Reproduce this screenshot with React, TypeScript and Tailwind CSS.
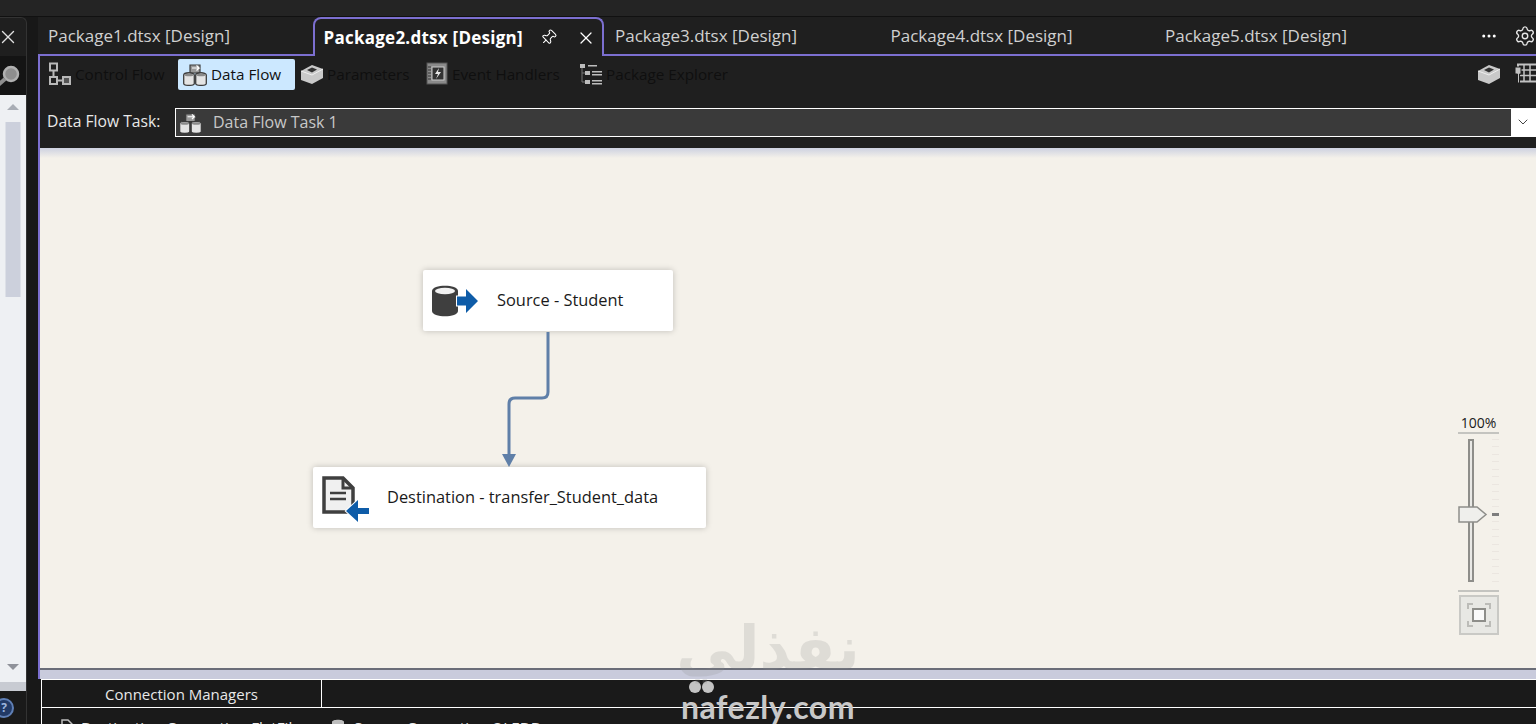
import React from 'react';
import { X, Pin, Ellipsis, Settings, ChevronDown } from 'lucide-react';

const FONT = "font-['Open_Sans','Noto_Sans',sans-serif]";

function ControlFlowIcon() {
  return (
    <svg width="24" height="24" viewBox="0 0 24 24" fill="none" stroke="#b8b8b8" strokeWidth="2">
      <rect x="2" y="1.500" width="7" height="7" />
      <rect x="2" y="15" width="7" height="7" />
      <rect x="15" y="15" width="7" height="7" fill="#555" />
      <path d="M5.500 8.500v6.500M9 18.500h6" />
    </svg>
  );
}

function DataFlowIcon({ color = '#3d3d3d', size = 24 }: { color?: string; size?: number }) {
  return (
    <svg width={size} height={size} viewBox="0 0 24 24">
      <path d="M7 3h10v8H7z" fill="#9a9a9a" stroke={color} strokeWidth="1.200" />
      <g fill="#e4e4e4" stroke={color} strokeWidth="1.300">
        <path d="M.7 13c0-3 10.600-3 10.600 0v8.500c0 2.500-10.600 2.500-10.600 0z" />
        <path d="M12.700 13c0-3 10.600-3 10.600 0v8.500c0 2.500-10.600 2.500-10.600 0z" />
      </g>
      <ellipse cx="6" cy="13" rx="4.500" ry="1.300" fill="#8a8a8a" />
      <ellipse cx="18" cy="13" rx="4.500" ry="1.300" fill="#8a8a8a" />
      <path d="M9 6h7l-2.500-2.500M16 6l-2.500 2.500" fill="none" stroke="#fff" strokeWidth="1.200" />
    </svg>
  );
}

function CubeIcon({ size = 24 }: { size?: number }) {
  return (
    <svg width={size} height={size} viewBox="0 0 24 24">
      <path d="M1 9l11-6 11 4v9l-11 6-11-4z" fill="#c9c9c9" />
      <path d="M7 8l5-2.500 5 2-5 3z" fill="#333" />
      <path d="M1 9l11 4 11-6" fill="none" stroke="#eee" strokeWidth="1" />
    </svg>
  );
}

function EventIcon() {
  return (
    <svg width="22" height="24" viewBox="0 0 22 24">
      <rect x="1" y="1" width="20" height="21" fill="#8a8a8a" stroke="#555" />
      <rect x="6" y="5" width="12" height="13" fill="#333" stroke="#ccc" />
      <path d="M13 6l-4 6h3l-2 5 5-7h-3z" fill="#e8e8e8" />
      <path d="M2 5h3M2 8h3M2 11h3M2 14h3M2 17h3" stroke="#333" />
    </svg>
  );
}

function ExplorerIcon() {
  return (
    <svg width="24" height="24" viewBox="0 0 24 24" fill="#bdbdbd">
      <rect x="1" y="2" width="5" height="4" />
      <rect x="6" y="9" width="5" height="4" />
      <rect x="6" y="18" width="5" height="4" />
      <path d="M9 3h9v1.500H9zM13 9h10v1.500H13zM13 12h10v1.500H13zM13 18h10v1.500H13zM13 21h10v1.500H13z" />
      <path d="M3 6v14h3M3 11h3" fill="none" stroke="#777" />
    </svg>
  );
}

function GridIcon() {
  return (
    <svg width="24" height="24" viewBox="0 0 24 24" fill="none" stroke="#c2c2c2">
      <rect x="4" y="2.500" width="19" height="17" strokeWidth="2" />
      <path d="M4 8h19M4 13.500h19M10 3v16M16 3v16" strokeWidth="1.500" />
      <path d="M1 5h6v7H5.500v9h-2v-9H1z" fill="#c2c2c2" stroke="#1f1f1f" />
    </svg>
  );
}

function SourceIcon() {
  return (
    <svg width="47" height="34" viewBox="0 0 47 34">
      <path d="M0 7c0-7 26-7 26 0v20c0 7-26 7-26 0z" fill="#3f3f3f" />
      <ellipse cx="13" cy="7" rx="10" ry="3.300" fill="#f2f2f2" />
      <path d="M25 12.500h9V5l12 12-12 12v-7.500h-9z" fill="#0e5ca8" stroke="#fff" strokeWidth="2" paintOrder="stroke" />
    </svg>
  );
}

function DestinationIcon() {
  return (
    <svg width="48" height="46" viewBox="0 0 48 46">
      <path d="M2 2h19l10 10v24H2z" fill="#f0f0f0" stroke="#3f3f3f" strokeWidth="3.500" />
      <path d="M21 2v10h10" fill="none" stroke="#3f3f3f" strokeWidth="3" />
      <path d="M8 17h16M8 23h16" stroke="#3f3f3f" strokeWidth="2.500" />
      <path d="M47 35H36v-8L24 38l12 11v-8h11z" fill="#0e5ca8" stroke="#fff" strokeWidth="2" paintOrder="stroke" transform="translate(0 -3)" />
    </svg>
  );
}

function Node({ className, icon, label, textClass }: { className: string; icon: React.ReactNode; label: string; textClass: string }) {
  return (
    <div className={`absolute flex h-[61px] items-center rounded-[2px] bg-white text-[16.4px] text-[#1a1a1a] shadow-[0_0_6px_rgba(0,0,0,0.22)] ${className}`}>
      {icon}
      <span className={`whitespace-nowrap ${textClass}`}>{label}</span>
    </div>
  );
}

function ZoomSlider() {
  const ticks = Array.from({ length: 20 });
  return (
    <div className="absolute left-[1418px] top-[255px] flex w-[41px] flex-col items-center">
      <div className="h-[19px] text-[14px] leading-[19px] text-[#1a1a1a]">100%</div>
      <div className="h-[2px] w-full bg-[#c4c4c0]" />
      <div className="relative mt-[5px] h-[143px] w-full">
        <div className="absolute left-[10px] top-0 h-full w-[6px] border-2 border-[#8e8e8a] bg-[#e9e9e6]" />
        <div className="absolute left-[34px] top-0 flex h-full flex-col justify-between">
          {ticks.map((_, i) => (
            <div key={i} className="h-px w-[7px] bg-[#ebe6e0]" />
          ))}
        </div>
        <div className="absolute left-[34px] top-[74px] h-[3px] w-[7px] bg-[#7d7d7d]" />
        <svg className="absolute left-0 top-[67px]" width="30" height="17" viewBox="0 0 30 17">
          <path d="M1 1h18l9 7.500-9 7.500H1z" fill="#efefec" stroke="#8e8e8a" strokeWidth="1.500" />
        </svg>
      </div>
      <div className="mt-[8px] h-[2px] w-full bg-[#c4c4c0]" />
      <div className="mt-[3px] flex h-[40px] w-[40px] items-center justify-center border-2 border-[#c9c9c5] bg-[#e8e8e4]">
        <svg width="24" height="24" viewBox="0 0 24 24" fill="none">
          <path d="M1 6V1h5M18 1h5v5M23 18v5h-5M6 23H1v-5" stroke="#bcbcb8" strokeWidth="2" />
          <rect x="6" y="6" width="12" height="12" fill="#fafafa" stroke="#8e8e8a" strokeWidth="2" />
        </svg>
      </div>
    </div>
  );
}

export default function App() {
  return (
    <div className={`relative flex h-[724px] w-[1536px] flex-col overflow-hidden bg-[#181818] ${FONT}`}>
      {/* title strip */}
      <div className="h-[17px] shrink-0 border-b border-[#111] bg-[#242424]" />

      <div className="flex min-h-0 flex-1">
        {/* left dock */}
        <div className="flex w-[27px] shrink-0 flex-col overflow-hidden rounded-tr-[6px] border-r border-t border-[#333] bg-[#1f1f1f]">
          <div className="flex h-[38px] shrink-0 items-center">
            <X className="-ml-[3px] text-[#e0e0e0]" size={22} strokeWidth={1.500} />
          </div>
          <div className="flex h-[39px] shrink-0 items-center bg-[#141414]">
            <svg width="26" height="26" viewBox="0 0 26 26" className="-ml-[4px]">
              <circle cx="15" cy="11" r="7" fill="#8e8e8e" stroke="#b0b0b0" strokeWidth="2.500" />
              <path d="M9 16l-7 6" stroke="#8e8e8e" strokeWidth="4" />
            </svg>
          </div>
          <div className="flex min-h-0 flex-1 flex-col items-center bg-[#eef0f3] pb-[12px]">
            <div className="mt-[9px] h-0 w-0 border-x-[6px] border-b-[6px] border-x-transparent border-b-[#a9adb5]" />
            <div className="mt-[12px] h-[175px] w-[15px] -translate-x-[0.5px] bg-[#ccd0dc]" />
            <div className="flex-1" />
            <div className="h-0 w-0 border-x-[6px] border-t-[6px] border-x-transparent border-t-[#8f929a]" />
          </div>
          <div className="h-[9px] shrink-0 bg-[#c8cbd2]" />
          <div className="flex h-[33px] shrink-0 items-center bg-[#1a1a1a]">
            <div className="-ml-[6px] flex h-[20px] w-[20px] items-center justify-center rounded-full border-2 border-[#5f7fb5] bg-[#223a66] text-[12px] font-bold text-[#9db5dd]">?</div>
          </div>
        </div>

        <div className="w-[11px] shrink-0" />

        {/* designer */}
        <div className="flex min-w-0 flex-1 flex-col">
          {/* document tabs */}
          <div className="relative z-10 -mb-[1px] flex h-[39px] shrink-0 bg-[#1f1f1f] text-[17px] text-[#d0d0d0]">
            <div className="flex w-[275px] items-center rounded-tl-[6px] border-b-2 border-[#7c6fd0] pl-[10px] pt-[1px]">Package1.dtsx [Design]</div>
            <div className="flex w-[292px] items-center rounded-t-[8px] border-2 border-b-0 border-[#7c6fd0] bg-[#1f1f1f] pl-[9px] font-bold tracking-[0.25px] text-white">
              <span className="w-[216px] whitespace-nowrap">Package2.dtsx [Design]</span>
              <Pin className="rotate-45 text-white" size={17} strokeWidth={1.500} />
              <X className="ml-[19px] text-white" size={20} strokeWidth={1.500} />
            </div>
            <div className="flex w-[275px] items-center border-b-2 border-[#7c6fd0] pl-[11px] pt-[1px]">Package3.dtsx [Design]</div>
            <div className="flex w-[275px] items-center border-b-2 border-[#7c6fd0] pl-[12px] pt-[1px]">Package4.dtsx [Design]</div>
            <div className="flex flex-1 items-center border-b-2 border-[#7c6fd0] pl-[12px] pt-[1px]">
              <span className="w-[315px] whitespace-nowrap">Package5.dtsx [Design]</span>
              <Ellipsis className="text-white" size={18} />
              <Settings className="ml-[16px] shrink-0 text-[#e6e6e6]" size={22} strokeWidth={1.500} />
            </div>
          </div>

          <div className="flex min-h-0 flex-1 flex-col border-l-2 border-[#7c6fd0]">
            {/* designer tabs */}
            <div className="flex h-[41px] shrink-0 items-center bg-[#1f1f1f] pl-[8px] pb-[3px] text-[15.25px] text-[#0f0f0f]">
              <ControlFlowIcon />
              <span className="ml-[3px] w-[93px] whitespace-nowrap">Control Flow</span>
              <div className="ml-[10px] flex h-[31px] w-[117px] items-center rounded-[2px] bg-[#cce8ff] pl-[5px] text-[#111]">
                <DataFlowIcon />
                <span className="ml-[4px] whitespace-nowrap">Data Flow</span>
              </div>
              <div className="ml-[5px] flex items-center">
                <CubeIcon />
                <span className="ml-[3px] w-[84px] whitespace-nowrap">Parameters</span>
              </div>
              <div className="ml-[15px] flex items-center">
                <EventIcon />
                <span className="ml-[4px] w-[111px] whitespace-nowrap">Event Handlers</span>
              </div>
              <div className="ml-[16px] flex flex-1 items-center">
                <ExplorerIcon />
                <span className="ml-[3px] whitespace-nowrap">Package Explorer</span>
              </div>
              <CubeIcon />
              <div className="ml-[13px] -mr-[2px]">
                <GridIcon />
              </div>
            </div>

            {/* task picker */}
            <div className="flex h-[52px] shrink-0 items-center bg-[#1f1f1f] pl-[7px] text-[15.7px] text-[#e8e8e8]">
              <span className="w-[128px] whitespace-nowrap">Data Flow Task:</span>
              <div className="flex h-[29px] flex-1 items-center border border-white bg-[#3a3a3a] pl-[3px] text-[#c8c8c8]">
                <DataFlowIcon color="#3a3a3a" size={23} />
                <span className="ml-[11px] flex-1 whitespace-nowrap text-[16px]">Data Flow Task 1</span>
                <div className="flex h-full w-[24px] items-center justify-center bg-white">
                  <ChevronDown className="text-[#444]" size={16} strokeWidth={1.500} />
                </div>
              </div>
            </div>

            <div className="h-[10px] shrink-0 bg-gradient-to-b from-[#cdd1e0] to-[#f4f1ea]" />

            {/* canvas */}
            <div className="relative min-h-0 flex-1 bg-[#f4f1ea]">
              <Node
                className="left-[383px] top-[112px] w-[250px]"
                icon={<div className="ml-[9px]"><SourceIcon /></div>}
                label="Source - Student"
                textClass="ml-[18px]"
              />
              <Node
                className="left-[273px] top-[309px] w-[393px]"
                icon={<div className="ml-[9px] mt-[2px]"><DestinationIcon /></div>}
                label="Destination - transfer_Student_data"
                textClass="ml-[17px]"
              />
              <svg className="absolute left-[460px] top-[174px]" width="60" height="136" viewBox="0 0 60 136" fill="none">
                <path d="M48 0V60q0 6-6 6H15q-6 0-6 6v54" stroke="#5f7fa8" strokeWidth="3" />
                <path d="M2 122h14l-7 13z" fill="#5f7fa8" />
              </svg>
              <ZoomSlider />
            </div>

            <div className="h-[11px] shrink-0 border-t-2 border-[#6a6d78] bg-[#c9cbdc]" />
          </div>

          {/* connection managers */}
          <div className="ml-[3px] flex h-[45px] shrink-0 flex-col border-l border-t border-white bg-[#1a1a1a] text-[15px] text-[#e8e8e8]">
            <div className="flex h-[28px] shrink-0 border-b border-white">
              <div className="flex w-[280px] items-center border-r border-white pl-[63px] pt-[1px]">Connection Managers</div>
            </div>
            <div className="mt-[8px] flex items-center pl-[19px] text-[15.2px]">
              <svg width="12" height="16" viewBox="0 0 12 16" fill="none" stroke="#bdbdbd" strokeWidth="1.500">
                <path d="M1 1h6l4 4v10H1zM3 7h6" />
              </svg>
              <span className="ml-[8px] w-[251px] whitespace-nowrap">Destination Connection FlatFile</span>
              <svg width="12" height="16" viewBox="0 0 12 16" fill="#bdbdbd">
                <path d="M0 3c0-3 12-3 12 0v10c0 3-12 3-12 0z" />
              </svg>
              <span className="ml-[10px] whitespace-nowrap">Source Connection OLEDB</span>
            </div>
          </div>
        </div>
      </div>

      {/* watermark */}
      <div className="pointer-events-none absolute left-[660px] top-[618px] flex w-[216px] flex-col items-center">
        <div dir="rtl" className="h-[60px] whitespace-nowrap font-['DejaVu_Sans',sans-serif] text-[60px] font-bold leading-[60px] text-[#8c8c8c] opacity-[0.2]">نفذلي</div>
        <div className="mt-[3px] flex w-[172px] gap-[1px] pl-[7px]">
          <div className="h-[12px] w-[12px] rounded-full bg-[#c4c4c4]" />
          <div className="h-[12px] w-[12px] rounded-full bg-[#c4c4c4]" />
        </div>
        <div className="-mt-[2px] whitespace-nowrap font-['Lato',sans-serif] text-[32px] font-bold leading-[32px] tracking-[0.5px] text-[#c8c8c8]">nafezly.com</div>
      </div>
    </div>
  );
}
